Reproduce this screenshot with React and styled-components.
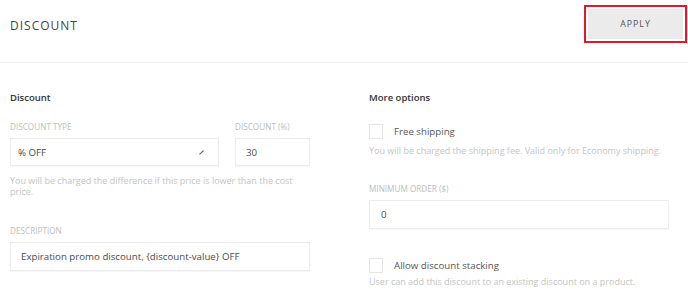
import React from "react";
import styled, { createGlobalStyle } from "styled-components";

const GlobalStyle = createGlobalStyle`
  * { box-sizing: border-box; }
  body {
    margin: 0;
    background: #ffffff;
    font-family: 'Open Sans', 'Liberation Sans', sans-serif;
  }
`

const Page = styled.div`
  width: 688px;
  height: 289px;
  overflow: hidden;
  background: #ffffff;
`

const Header = styled.div`
  display: flex;
  justify-content: space-between;
  align-items: flex-start;
  height: 63px;
  padding: 5px 1px 0 10px;
  border-bottom: 1px solid #efefef;
`

const Title = styled.h1`
  margin: 14px 0 0 0;
  font-size: 12px;
  font-weight: 400;
  letter-spacing: 1px;
  color: #444444;
  line-height: 14px;
`

const Highlight = styled.div`
  width: 103px;
  height: 38px;
  padding: 2px;
  border: 2px solid #e2172d;
`

const ApplyButton = styled.button`
  width: 100%;
  height: 100%;
  border: none;
  background: #ebebeb;
  color: #555555;
  font-family: inherit;
  font-size: 8.8px;
  letter-spacing: 1px;
  cursor: pointer;
`

const Body = styled.div`
  display: grid;
  grid-template-columns: 300px 300px;
  column-gap: 59px;
  padding: 28px 10px 0 10px;
`

const Column = styled.div`
  display: flex;
  flex-direction: column;
`

const SectionTitle = styled.h2`
  margin: 0;
  font-size: 9.5px;
  font-weight: 600;
  line-height: 14px;
  color: #333333;
`

const Row = styled.div`
  display: flex;
  gap: 16px;
  margin-top: ${p => p.$top || 0}px;
`

const Field = styled.div`
  display: flex;
  flex-direction: column;
  width: ${p => p.$width ? p.$width + 'px' : '100%'};
  margin-top: ${p => p.$top || 0}px;
`

const Label = styled.label`
  font-size: 8.2px;
  line-height: 12px;
  color: #bdbdbd;
  text-transform: uppercase;
  margin-bottom: 5px;
`

const Box = styled.div`
  display: flex;
  align-items: center;
  justify-content: space-between;
  height: ${p => p.$height || 28}px;
  padding: 0 ${p => p.$padRight || 8}px 0 ${p => p.$padLeft || 7}px;
  border: 1px solid #ececec;
  box-shadow: 0 1px 1px rgba(0, 0, 0, 0.03);
  font-size: 9.7px;
  color: #4a4a4a;
  background: #ffffff;
`

const Hint = styled.p`
  margin: ${p => p.$top || 0}px 0 0 0;
  font-size: 9px;
  line-height: 11px;
  color: #c4c4c4;
`

const CheckRow = styled.div`
  display: flex;
  align-items: center;
  gap: 11px;
  margin-top: ${p => p.$top || 0}px;
`

const CheckBox = styled.span`
  width: 14px;
  height: 15px;
  border: 1px solid #e6e6e6;
  background: #ffffff;
`

const CheckText = styled.span`
  font-size: 9.7px;
  line-height: 14px;
  color: #555555;
`

const Caret = () => (
  <svg width="5" height="5" viewBox="0 0 5 5">
    <path d="M0.8 4.2 L4.2 0.8" stroke="#666" strokeWidth="1.1" strokeLinecap="round" />
  </svg>
)

export const App = () => {
  return (
    <Page>
      <GlobalStyle />
      <Header>
        <Title>DISCOUNT</Title>
        <Highlight>
          <ApplyButton>APPLY</ApplyButton>
        </Highlight>
      </Header>
      <Body>
        <Column>
          <SectionTitle>Discount</SectionTitle>
          <Row $top={16}>
            <Field $width={209}>
              <Label>Discount type</Label>
              <Box $padRight={14}>% OFF <Caret /></Box>
            </Field>
            <Field $width={75}>
              <Label>Discount (%)</Label>
              <Box $padLeft={10}>30</Box>
            </Field>
          </Row>
          <Hint $top={9}>You will be charged the difference if this price is lower than the cost price.</Hint>
          <Field $top={28}>
            <Label>Description</Label>
            <Box $height={29} $padLeft={10}>Expiration promo discount, {'{discount-value}'} OFF</Box>
          </Field>
        </Column>
        <Column>
          <SectionTitle>More options</SectionTitle>
          <CheckRow $top={19}>
            <CheckBox />
            <CheckText>Free shipping</CheckText>
          </CheckRow>
          <Hint $top={6}>You will be charged the shipping fee. Valid only for Economy shipping.</Hint>
          <Field $top={27}>
            <Label>Minimum order ($)</Label>
            <Box $height={29} $padLeft={11}>0</Box>
          </Field>
          <CheckRow $top={29}>
            <CheckBox />
            <CheckText>Allow discount stacking</CheckText>
          </CheckRow>
          <Hint $top={3}>User can add this discount to an existing discount on a product.</Hint>
        </Column>
      </Body>
    </Page>
  )
}

export default App
